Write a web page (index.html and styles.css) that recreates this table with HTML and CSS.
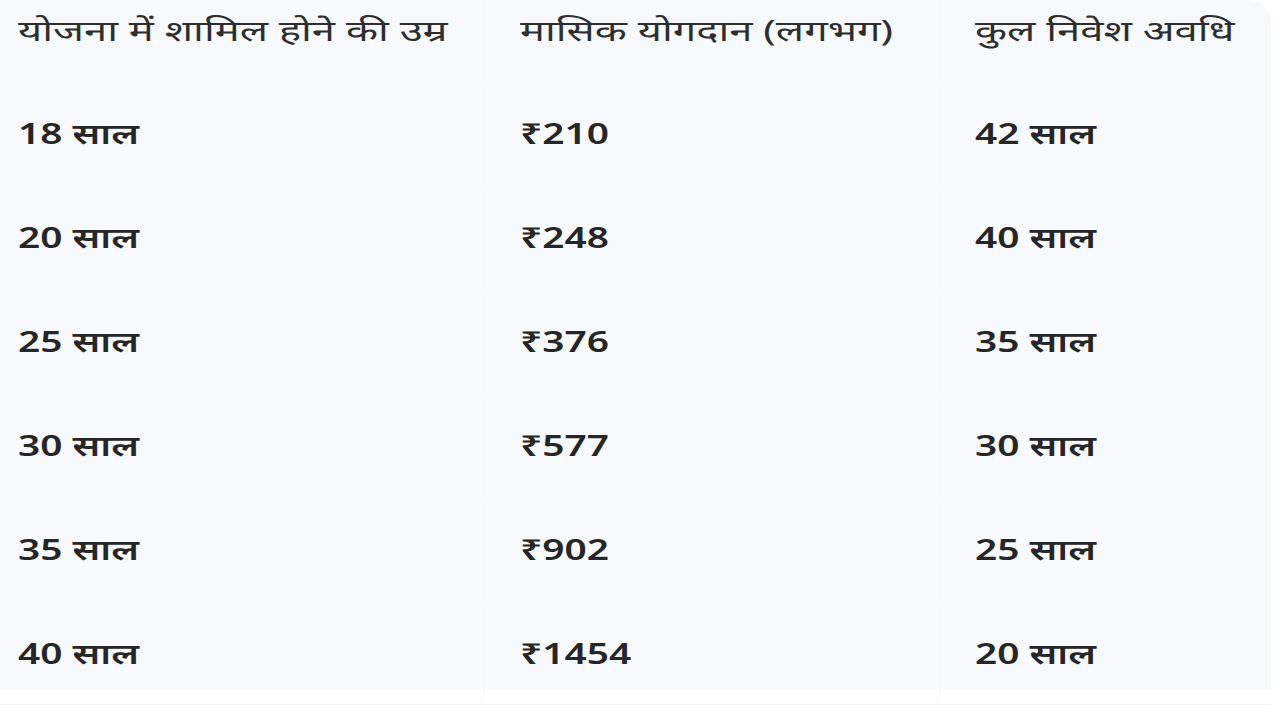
FILE: index.html
```html
<!DOCTYPE html>
<html lang="hi">
<head>
<meta charset="utf-8">
<link rel="stylesheet" href="styles.css">
</head>
<body>
<div class="page">
  <div class="table">
    <div class="cell head c1"><span class="t">योजना में शामिल होने की उम्र</span></div>
    <div class="cell head c2"><span class="t">मासिक योगदान (लगभग)</span></div>
    <div class="cell head c3"><span class="t">कुल निवेश अवधि</span></div>

    <div class="cell c1"><span class="t">18 साल</span></div>
    <div class="cell c2"><span class="t">₹210</span></div>
    <div class="cell c3"><span class="t">42 साल</span></div>

    <div class="cell c1"><span class="t">20 साल</span></div>
    <div class="cell c2"><span class="t">₹248</span></div>
    <div class="cell c3"><span class="t">40 साल</span></div>

    <div class="cell c1"><span class="t">25 साल</span></div>
    <div class="cell c2"><span class="t">₹376</span></div>
    <div class="cell c3"><span class="t">35 साल</span></div>

    <div class="cell c1"><span class="t">30 साल</span></div>
    <div class="cell c2"><span class="t">₹577</span></div>
    <div class="cell c3"><span class="t">30 साल</span></div>

    <div class="cell c1"><span class="t">35 साल</span></div>
    <div class="cell c2"><span class="t">₹902</span></div>
    <div class="cell c3"><span class="t">25 साल</span></div>

    <div class="cell c1"><span class="t">40 साल</span></div>
    <div class="cell c2"><span class="t">₹1454</span></div>
    <div class="cell c3"><span class="t">20 साल</span></div>
  </div>
</div>
</body>
</html>
```
FILE: styles.css
```css
html, body {
  margin: 0;
  padding: 0;
  background: #ffffff;
}
.page {
  width: 1280px;
  height: 720px;
  overflow: hidden;
}
.table {
  width: 1271px;
  height: 689px;
  background: #f8f9fd;
  border-top-right-radius: 22px;
  display: grid;
  grid-template-columns: 484px 456px 331px;
  grid-template-rows: 81px repeat(6, 104px);
  font-family: "Noto Sans", "Noto Sans Devanagari", sans-serif;
}
.cell {
  display: flex;
  align-items: center;
  font-size: 29px;
  font-weight: 600;
  color: #262626;
  border-bottom: 1px solid #f6f7fb;
  white-space: nowrap;
}
.t {
  display: inline-block;
  transform: scaleX(1.34);
  transform-origin: left center;
}
.c1 { padding-left: 18px; border-right: 1px solid #f6f7fb; }
.c2 { padding-left: 36px; border-right: 1px solid #f6f7fb; }
.c3 { padding-left: 35px; }
.head {
  align-items: flex-start;
  padding-top: 10px;
  font-weight: 400;
  color: #2e2e2e;
  font-size: 29px;
}
.head .t {
  transform: scaleX(1.44);
}
```
